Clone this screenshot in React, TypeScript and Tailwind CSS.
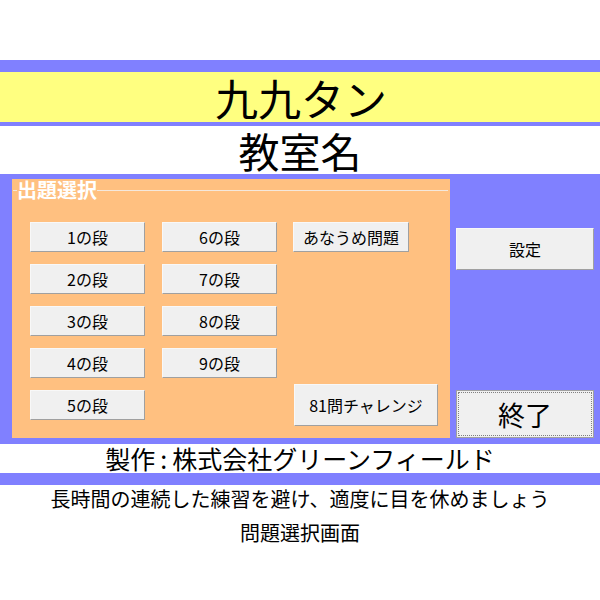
import React from 'react';

const font = { fontFamily: '"Noto Sans CJK JP", "Noto Sans", sans-serif' };

const leftCol = ['1の段', '2の段', '3の段', '4の段', '5の段'];
const midCol = ['6の段', '7の段', '8の段', '9の段'];

const btn =
  'flex items-center justify-center bg-[#f0f0f0] border-t border-l border-t-[#f8f8f8] border-l-[#f8f8f8] border-r border-b border-r-[#a0a0a0] border-b-[#a0a0a0] text-black leading-none';

const Btn: React.FC<{ label: string; className?: string }> = ({ label, className = '' }) => (
  <button type="button" className={`${btn} ${className}`}>
    {label}
  </button>
);

const App: React.FC = () => {
  return (
    <div className="flex h-[600px] w-[600px] flex-col bg-white text-black" style={font}>
      {/* 上部 */}
      <div className="h-[60px]" />
      <div className="h-[12px] bg-[#8080ff]" />
      <div className="flex h-[50px] items-center justify-center bg-[#ffff80] pl-[2px] text-[43px] leading-none">
        九九タン
      </div>
      <div className="h-[4px] bg-[#8080ff]" />
      <div className="flex h-[48px] items-center justify-center text-[41px] leading-none">
        教室名
      </div>

      {/* メイン */}
      <div className="flex h-[270px] bg-[#8080ff] pl-[12px] pr-[6px]">
        <div className="mt-[5px] mb-[6px] flex w-[438px] flex-col bg-[#ffc080]">
          <div className="flex h-[22px] items-center">
            <div className="ml-px h-px w-[4px] bg-[#f4e8dc]" />
            <span className="text-[20px] font-bold leading-none text-white">出題選択</span>
            <div className="mr-[2px] h-px flex-1 bg-[#f4e8dc]" />
          </div>
          <div className="mt-[21px] flex pl-[18px] text-[16px]">
            <div className="flex w-[115px] flex-col gap-[12px]">
              {leftCol.map((l) => (
                <Btn key={l} label={l} className="h-[30px]" />
              ))}
            </div>
            <div className="ml-[17px] flex w-[115px] flex-col gap-[12px]">
              {midCol.map((l) => (
                <Btn key={l} label={l} className="h-[30px]" />
              ))}
            </div>
            <div className="ml-[16px] flex h-[204px] flex-col">
              <Btn label="あなうめ問題" className="h-[30px] w-[116px]" />
              <Btn label="81問チャレンジ" className="mt-auto ml-px h-[42px] w-[144px]" />
            </div>
          </div>
        </div>
        <div className="ml-[6px] flex flex-1 flex-col pt-[54px] pb-[6px]">
          <Btn label="設定" className="h-[42px] text-[16px]" />
          <button
            type="button"
            className="mt-auto flex h-[48px] items-center justify-center border border-[#a0a0a0] bg-[#f0f0f0] p-px"
          >
            <span className="flex h-full w-full items-center justify-center border border-dotted border-[#808080] text-[27px] leading-none">
              終了
            </span>
          </button>
        </div>
      </div>

      {/* 下部 */}
      <div className="flex h-[29px] items-center justify-center text-[25px] leading-none">
        製作<span className="px-[5px]">:</span>株式会社グリーンフィールド
      </div>
      <div className="h-[12px] bg-[#8080ff]" />
      <div className="flex h-[24px] items-end justify-center text-[20px] leading-none">
        長時間の連続した練習を避け、適度に目を休めましょう
      </div>
      <div className="mt-[14px] flex justify-center text-[20px] leading-none">問題選択画面</div>
    </div>
  );
};

export default App;
